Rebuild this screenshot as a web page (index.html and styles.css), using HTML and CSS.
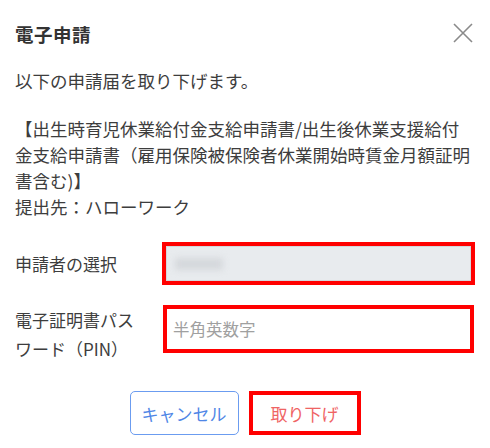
FILE: index.html
```html
<!DOCTYPE html>
<html lang="ja">
<head>
<meta charset="utf-8">
<link rel="stylesheet" href="styles.css">
</head>
<body>
<div class="dialog">
  <div class="header">
    <h1 class="title">電子申請</h1>
    <button class="close" aria-label="閉じる">
      <svg width="20" height="20" viewBox="0 0 20 20"><path d="M1 1L19 19M19 1L1 19" stroke="#8a8a8a" stroke-width="1.6" fill="none"/></svg>
    </button>
  </div>
  <div class="content">
    <p class="lead">以下の申請届を取り下げます。</p>
    <p class="detail">【出生時育児休業給付金支給申請書/出生後休業支援給付金支給申請書（雇用保険被保険者休業開始時賃金月額証明書含む)】<br>提出先：ハローワーク</p>
    <div class="row row-select">
      <div class="label">申請者の選択</div>
      <div class="select-box"><div class="select-inner"><span class="blur"></span></div></div>
    </div>
    <div class="row row-pin">
      <div class="label">電子証明書パスワード（PIN）</div>
      <div class="pin-box"><span class="placeholder">半角英数字</span></div>
    </div>
    <div class="actions">
      <button class="btn btn-cancel">キャンセル</button>
      <button class="btn btn-remove">取り下げ</button>
    </div>
  </div>
</div>
</body>
</html>
```
FILE: styles.css
```css
* { box-sizing: border-box; }
html, body { margin: 0; padding: 0; background: #fff; }
body {
  font-family: "Noto Sans CJK JP", "Noto Sans", sans-serif;
  color: #3d3d3d;
  width: 490px;
  height: 448px;
  overflow: hidden;
}
.dialog { width: 490px; }
.header {
  display: flex;
  justify-content: space-between;
  align-items: center;
  padding: 21px 17px 0 15px;
}
.title {
  margin: 0;
  font-size: 18.5px;
  line-height: 26px;
  font-weight: 700;
  color: #333;
  letter-spacing: 0.5px;
}
.close {
  border: 0;
  background: none;
  padding: 0;
  width: 20px;
  height: 20px;
  margin-top: -3px;
  display: block;
}
.close svg { display: block; }
.content { padding: 0 15px; }
.lead {
  margin: 21px 0 0;
  font-size: 17.5px;
  line-height: 26px;
}
.detail {
  margin: 22px 0 0;
  font-size: 17.5px;
  line-height: 26px;
}
.row {
  display: flex;
  align-items: center;
}
.row-select { margin-top: 22px; }
.row-pin { margin-top: 20px; align-items: flex-start; }
.label {
  width: 147px;
  flex: none;
  font-size: 17px;
  line-height: 29px;
  padding-right: 20px;
}
.select-box {
  width: 313px;
  height: 43px;
  border: 4px solid #ff0000;
  background: #fff;
}
.select-inner {
  height: 100%;
  border: 1px solid #d3d7dc;
  background: #e8ebee;
  display: flex;
  align-items: center;
  padding-left: 8px;
}
.blur {
  display: block;
  width: 48px;
  height: 12px;
  background: #d5d8dc;
  filter: blur(3px);
}
.pin-box {
  width: 311px;
  height: 48px;
  margin-left: 1px;
  border: 4px solid #ff0000;
  background: #fff;
  display: flex;
  align-items: center;
  padding-left: 6px;
}
.placeholder {
  font-size: 16.5px;
  color: #a0a0a0;
}
.actions {
  display: flex;
  justify-content: center;
  gap: 10px;
  margin-top: 28px;
}
.btn {
  font-family: "Noto Sans CJK JP", "Noto Sans", sans-serif;
  font-size: 17px;
  height: 44px;
  background: #fff;
  padding: 0;
  cursor: pointer;
}
.btn-cancel {
  width: 109px;
  border: 1.5px solid #6b9cf0;
  border-radius: 5px;
  color: #4f86e6;
}
.btn-remove {
  width: 112px;
  border: 4px solid #ff0000;
  border-radius: 0;
  color: #ef6464;
}
```
